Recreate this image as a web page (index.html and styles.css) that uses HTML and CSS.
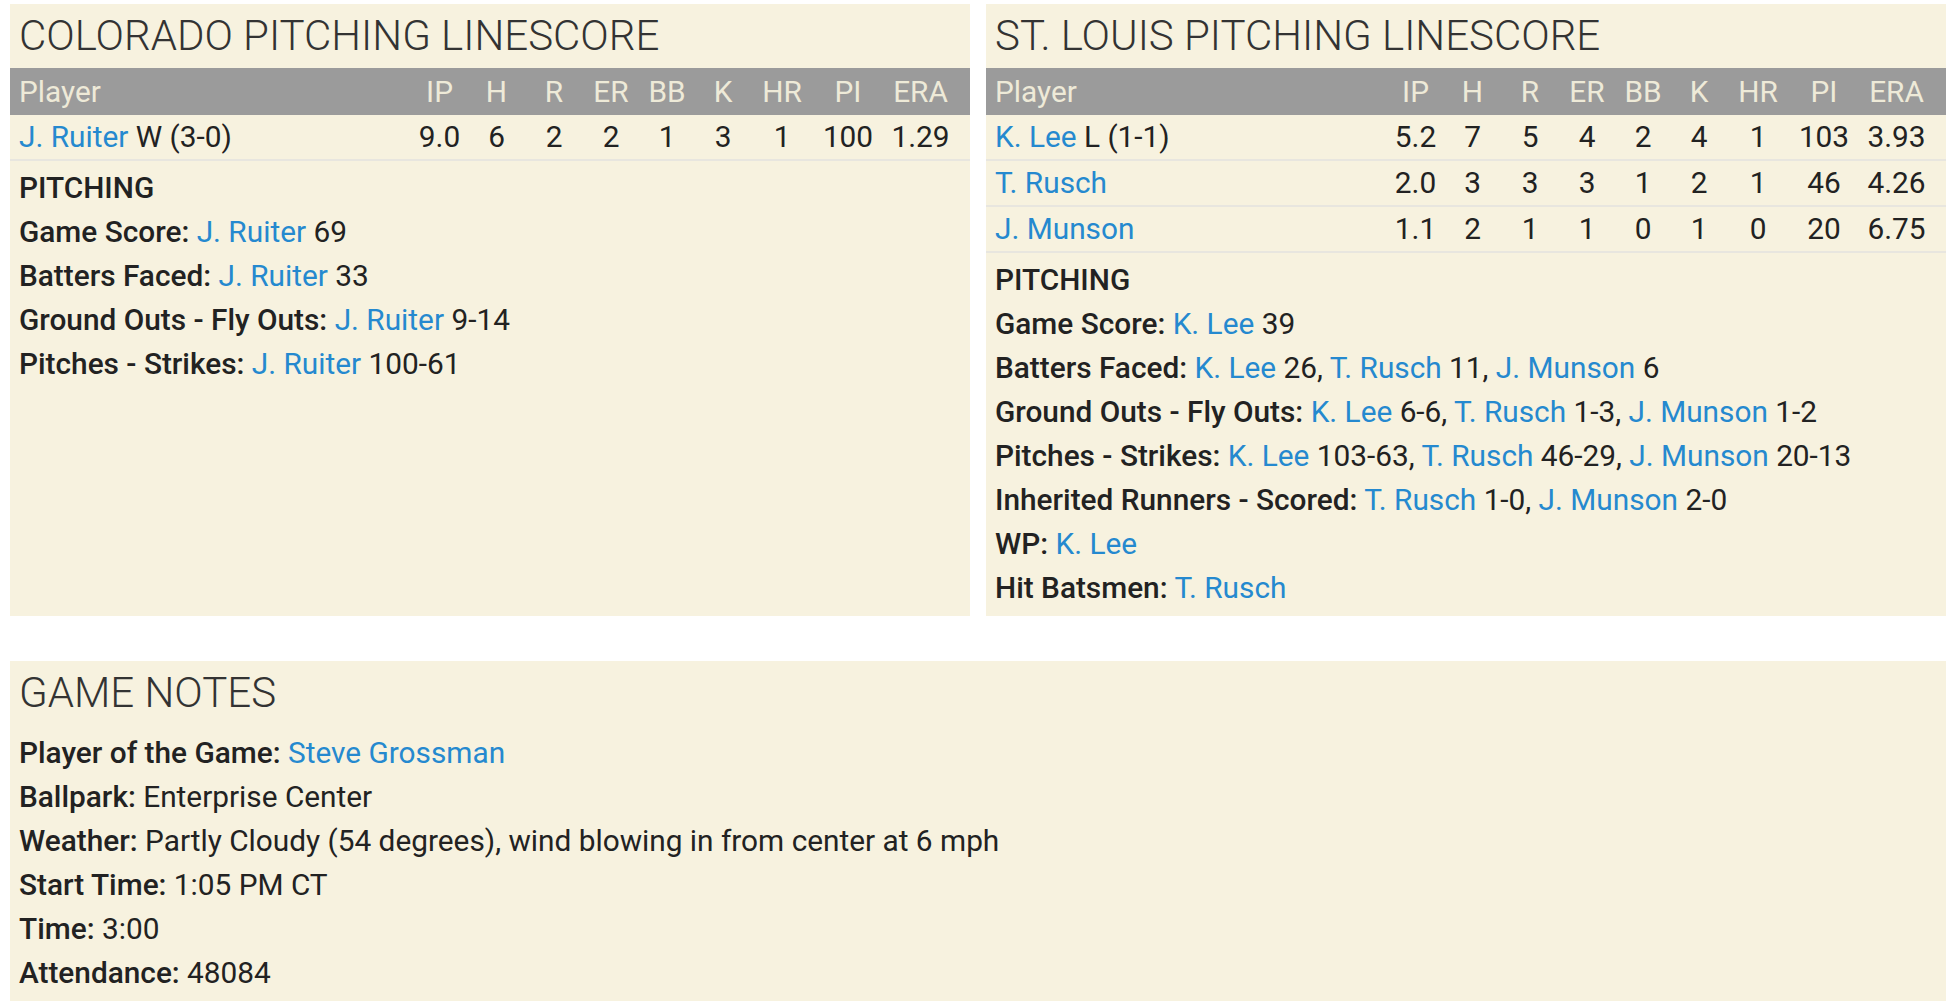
FILE: index.html
```html
<!DOCTYPE html>
<html lang="en">
<head>
  <meta charset="UTF-8">
  <title>Box Score - Pitching</title>
  <link rel="stylesheet" href="styles.css">
</head>
<body>
  <div class="page">
    <div class="linescores">
      <!-- Colorado -->
      <div class="panel">
        <h2 class="panel-title">COLORADO PITCHING LINESCORE</h2>
        <div class="row head">
          <span class="player">Player</span>
          <span>IP</span><span>H</span><span>R</span><span>ER</span><span>BB</span><span>K</span><span>HR</span><span>PI</span><span>ERA</span>
        </div>
        <div class="row">
          <span class="player"><a href="#">J. Ruiter</a> W (3-0)</span>
          <span>9.0</span><span>6</span><span>2</span><span>2</span><span>1</span><span>3</span><span>1</span><span>100</span><span>1.29</span>
        </div>
        <div class="notes">
          <div class="line"><b>PITCHING</b></div>
          <div class="line"><b>Game Score:</b> <a href="#">J. Ruiter</a> 69</div>
          <div class="line"><b>Batters Faced:</b> <a href="#">J. Ruiter</a> 33</div>
          <div class="line"><b>Ground Outs - Fly Outs:</b> <a href="#">J. Ruiter</a> 9-14</div>
          <div class="line"><b>Pitches - Strikes:</b> <a href="#">J. Ruiter</a> 100-61</div>
        </div>
      </div>

      <!-- St. Louis -->
      <div class="panel">
        <h2 class="panel-title">ST. LOUIS PITCHING LINESCORE</h2>
        <div class="row head">
          <span class="player">Player</span>
          <span>IP</span><span>H</span><span>R</span><span>ER</span><span>BB</span><span>K</span><span>HR</span><span>PI</span><span>ERA</span>
        </div>
        <div class="row">
          <span class="player"><a href="#">K. Lee</a> L (1-1)</span>
          <span>5.2</span><span>7</span><span>5</span><span>4</span><span>2</span><span>4</span><span>1</span><span>103</span><span>3.93</span>
        </div>
        <div class="row">
          <span class="player"><a href="#">T. Rusch</a></span>
          <span>2.0</span><span>3</span><span>3</span><span>3</span><span>1</span><span>2</span><span>1</span><span>46</span><span>4.26</span>
        </div>
        <div class="row">
          <span class="player"><a href="#">J. Munson</a></span>
          <span>1.1</span><span>2</span><span>1</span><span>1</span><span>0</span><span>1</span><span>0</span><span>20</span><span>6.75</span>
        </div>
        <div class="notes">
          <div class="line"><b>PITCHING</b></div>
          <div class="line"><b>Game Score:</b> <a href="#">K. Lee</a> 39</div>
          <div class="line"><b>Batters Faced:</b> <a href="#">K. Lee</a> 26, <a href="#">T. Rusch</a> 11, <a href="#">J. Munson</a> 6</div>
          <div class="line"><b>Ground Outs - Fly Outs:</b> <a href="#">K. Lee</a> 6-6, <a href="#">T. Rusch</a> 1-3, <a href="#">J. Munson</a> 1-2</div>
          <div class="line"><b>Pitches - Strikes:</b> <a href="#">K. Lee</a> 103-63, <a href="#">T. Rusch</a> 46-29, <a href="#">J. Munson</a> 20-13</div>
          <div class="line"><b>Inherited Runners - Scored:</b> <a href="#">T. Rusch</a> 1-0, <a href="#">J. Munson</a> 2-0</div>
          <div class="line"><b>WP:</b> <a href="#">K. Lee</a></div>
          <div class="line"><b>Hit Batsmen:</b> <a href="#">T. Rusch</a></div>
        </div>
      </div>
    </div>

    <div class="panel game-notes">
      <h2 class="panel-title">GAME NOTES</h2>
      <div class="notes">
        <div class="line"><b>Player of the Game:</b> <a href="#">Steve Grossman</a></div>
        <div class="line"><b>Ballpark:</b> Enterprise Center</div>
        <div class="line"><b>Weather:</b> Partly Cloudy (54 degrees), wind blowing in from center at 6 mph</div>
        <div class="line"><b>Start Time:</b> 1:05 PM CT</div>
        <div class="line"><b>Time:</b> 3:00</div>
        <div class="line"><b>Attendance:</b> 48084</div>
      </div>
    </div>
  </div>
</body>
</html>
```

FILE: styles.css
```css
* {
  box-sizing: border-box;
}
body {
  margin: 0;
  background: #fff;
  font-family: Roboto, "Liberation Sans", sans-serif;
  font-size: 29.8px;
  color: #222;
  overflow: hidden;
}
a {
  color: #2589cf;
  text-decoration: none;
}
b {
  font-weight: 500;
}
.page {
  padding: 4px 0 0 10px;
}
.linescores {
  display: grid;
  grid-template-columns: 960px 960px;
  gap: 16px;
}
.panel {
  background: #f7f2df;
}
.panel-title {
  margin: 0;
  padding-left: 9px;
  height: 64px;
  line-height: 64px;
  font-size: 42px;
  font-weight: 300;
  color: #333;
}
.row {
  display: grid;
  grid-template-columns: 1fr 57px 57px 58px 56px 56px 56px 62px 70px 75px;
  padding-right: 12px;
  height: 46px;
  line-height: 44px;
  border-bottom: 2px solid #e8e6df;
  text-align: center;
}
.row .player {
  text-align: left;
  padding-left: 9px;
}
.row.head {
  height: 47px;
  line-height: 47px;
  background: #9b9b9b;
  color: #eeead8;
  border-bottom: none;
}
.notes {
  padding: 5px 9px 6px;
}
.notes .line {
  height: 44px;
  line-height: 44px;
  white-space: nowrap;
}
.game-notes {
  width: 1936px;
  margin-top: 45px;
}
.game-notes .notes {
  padding-top: 6px;
}
```
